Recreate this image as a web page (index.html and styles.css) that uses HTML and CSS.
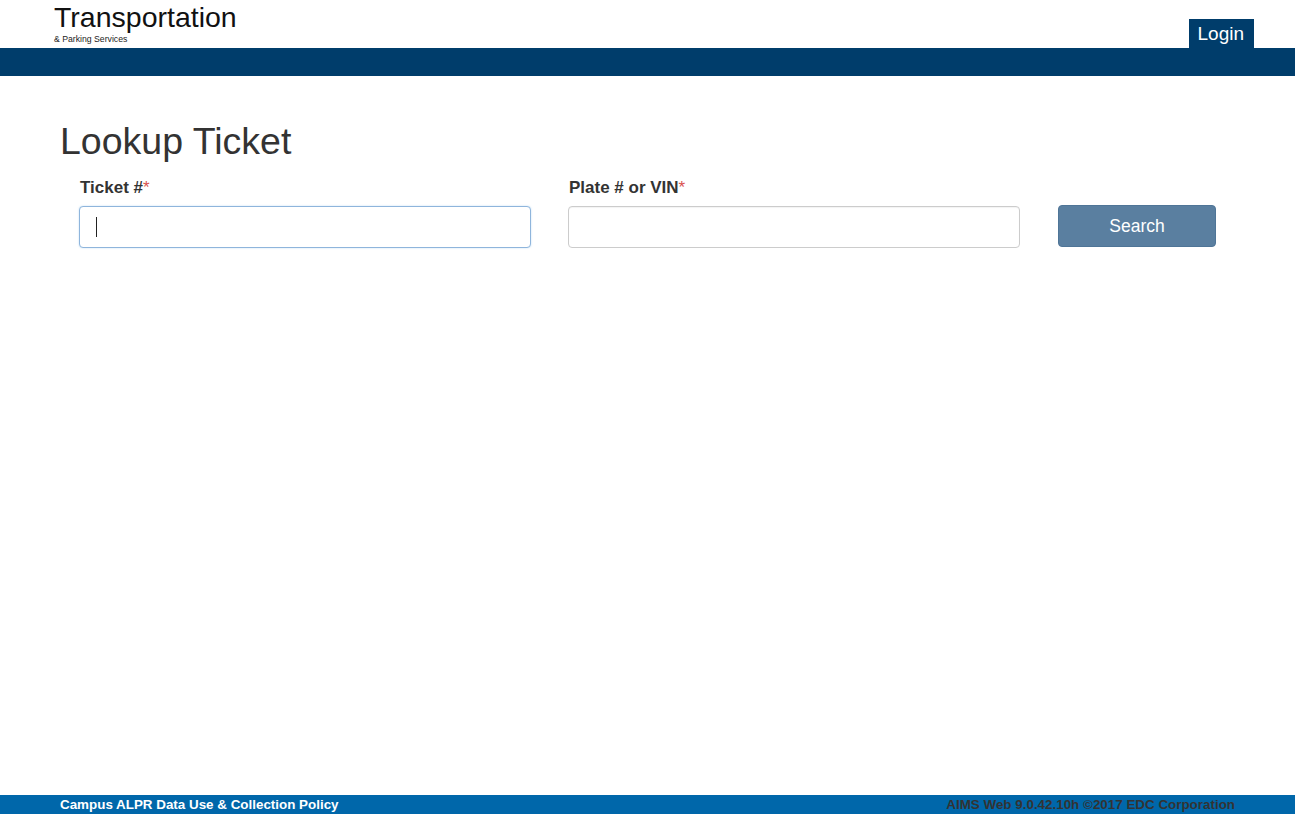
FILE: index.html
```html
<!DOCTYPE html>
<html lang="en">
<head>
<meta charset="utf-8">
<title>Lookup Ticket</title>
<link rel="stylesheet" href="styles.css">
</head>
<body>
<div class="page">
  <header class="site-header">
    <div class="brand-row">
      <a class="brand" href="#">
        <span class="brand-title">Transportation</span>
        <span class="brand-sub">&amp; Parking Services</span>
      </a>
      <a class="login" href="#">Login</a>
    </div>
    <div class="nav-bar"></div>
  </header>

  <main class="content">
    <h1 class="page-title">Lookup Ticket</h1>
    <form class="lookup-form">
      <div class="field">
        <label class="field-label">Ticket #<span class="req">*</span></label>
        <div class="input focused"><span class="caret"></span></div>
      </div>
      <div class="field">
        <label class="field-label">Plate # or VIN<span class="req">*</span></label>
        <div class="input"></div>
      </div>
      <div class="action">
        <button type="button" class="search-btn">Search</button>
      </div>
    </form>
  </main>

  <footer class="site-footer">
    <a class="footer-link" href="#">Campus ALPR Data Use &amp; Collection Policy</a>
    <span class="footer-version">AIMS Web 9.0.42.10h &copy;2017 EDC Corporation</span>
  </footer>
</div>
</body>
</html>
```
FILE: styles.css
```css
html, body {
  margin: 0;
  padding: 0;
  height: 100%;
}
body {
  font-family: "Liberation Sans", Arial, sans-serif;
  color: #333;
  background: #fff;
}
.page {
  min-height: 814px;
  display: flex;
  flex-direction: column;
}
.site-header {
  display: flex;
  flex-direction: column;
}
.brand-row {
  height: 48px;
  display: flex;
  justify-content: space-between;
  align-items: flex-end;
  padding: 0 41px 0 54px;
}
.brand {
  align-self: flex-start;
  display: flex;
  flex-direction: column;
  text-decoration: none;
  color: #111;
}
.brand-title {
  font-size: 28.5px;
  line-height: 33px;
  margin-top: 1px;
  color: #111;
}
.brand-sub {
  font-size: 8.7px;
  line-height: 10px;
  margin-top: 0;
  color: #222;
}
.login {
  display: block;
  background: #003d6b;
  color: #fff;
  text-decoration: none;
  font-size: 19px;
  line-height: 29px;
  height: 29px;
  padding: 0 10px 0 9px;
}
.nav-bar {
  height: 28px;
  background: #003d6b;
}
.content {
  flex: 1;
  padding: 0 0 0 60px;
}
.page-title {
  margin: 44px 0 0 0;
  font-size: 37.5px;
  font-weight: normal;
  line-height: 42px;
  color: #333;
}
.lookup-form {
  display: flex;
  align-items: flex-end;
  padding-left: 19px;
  margin-top: 16px;
}
.field {
  display: flex;
  flex-direction: column;
  width: 452px;
  margin-right: 37px;
}
.field-label {
  font-size: 17px;
  font-weight: bold;
  line-height: 20px;
  padding-left: 1px;
  margin-bottom: 8px;
  color: #333;
}
.req {
  color: #d9534f;
  font-weight: normal;
}
.input {
  box-sizing: border-box;
  height: 42px;
  border: 1px solid #ccc;
  border-radius: 4px;
  background: #fff;
  display: flex;
  align-items: center;
  padding-left: 16px;
  box-shadow: inset 0 1px 1px rgba(0,0,0,0.05);
}
.input.focused {
  border-color: #8fb5dc;
  box-shadow: 0 0 2px rgba(102,175,233,0.4);
}
.caret {
  width: 1px;
  height: 20px;
  background: #222;
}
.action {
  padding-left: 1px;
  padding-bottom: 1px;
}
.search-btn {
  width: 158px;
  height: 42px;
  border: 1px solid #4f7597;
  border-radius: 4px;
  background: #5a7fa0;
  color: #fff;
  font-family: "Liberation Sans", Arial, sans-serif;
  font-size: 17.5px;
  padding: 0;
}
.site-footer {
  height: 19px;
  background: #0067aa;
  display: flex;
  justify-content: space-between;
  align-items: center;
  padding: 0 60px 0 60px;
  font-size: 13.4px;
  font-weight: bold;
}
.footer-link {
  color: #fff;
  text-decoration: none;
}
.footer-version {
  color: #333;
}
```
